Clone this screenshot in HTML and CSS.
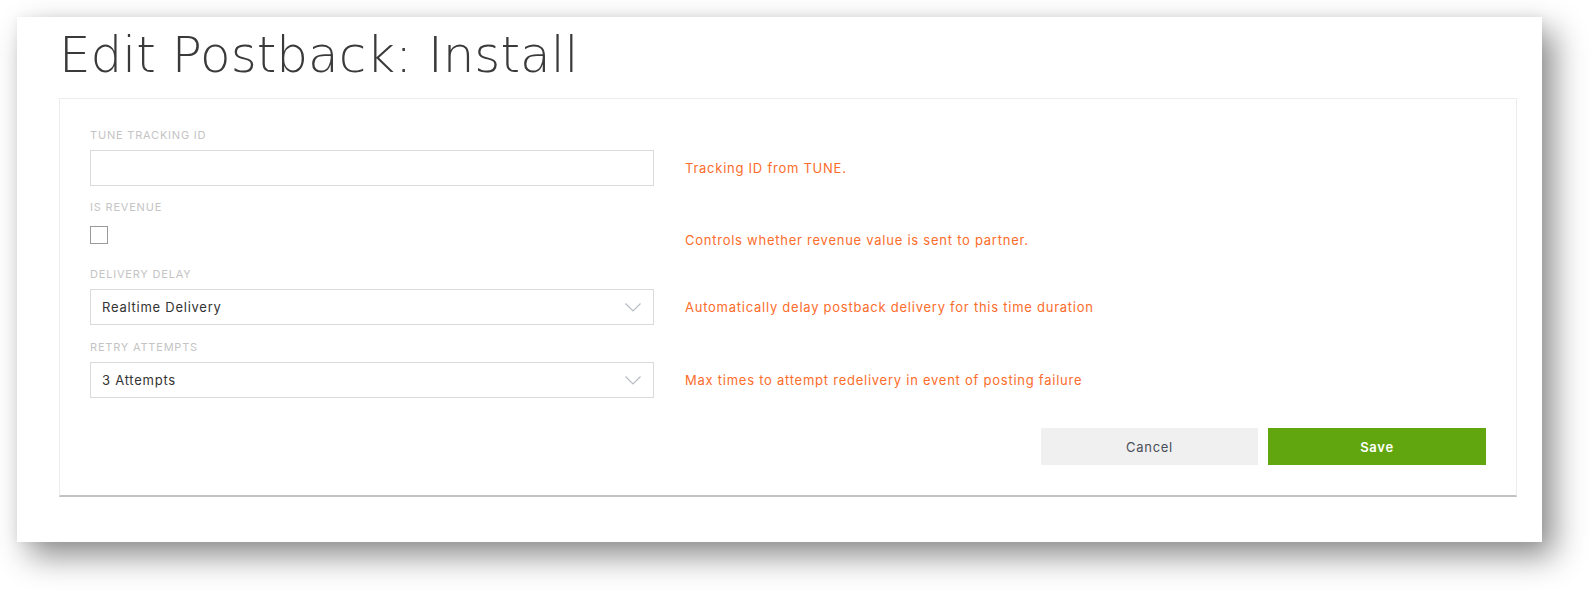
FILE: index.html
```html
<!DOCTYPE html>
<html lang="en">
<head>
<meta charset="utf-8">
<title>Edit Postback: Install</title>
<link rel="stylesheet" href="styles.css">
</head>
<body>
<div class="frame">
  <h1 class="title">Edit Postback: Install</h1>
  <div class="card">
    <div class="field">
      <div class="label">TUNE TRACKING ID</div>
      <div class="row">
        <div class="control input"></div>
        <div class="help">Tracking ID from TUNE.</div>
      </div>
    </div>
    <div class="field field-check">
      <div class="label">IS REVENUE</div>
      <div class="row row-check">
        <div class="control"><span class="checkbox"></span></div>
        <div class="help">Controls whether revenue value is sent to partner.</div>
      </div>
    </div>
    <div class="field field-delay">
      <div class="label">DELIVERY DELAY</div>
      <div class="row">
        <div class="control select">
          <span class="value">Realtime Delivery</span>
          <svg class="chevron" width="16" height="9" viewBox="0 0 16 9"><path d="M0.5 0.5 L8 8 L15.5 0.5" fill="none" stroke="#b9bcc4" stroke-width="1.2"/></svg>
        </div>
        <div class="help">Automatically delay postback delivery for this time duration</div>
      </div>
    </div>
    <div class="field field-retry">
      <div class="label">RETRY ATTEMPTS</div>
      <div class="row">
        <div class="control select">
          <span class="value">3 Attempts</span>
          <svg class="chevron" width="16" height="9" viewBox="0 0 16 9"><path d="M0.5 0.5 L8 8 L15.5 0.5" fill="none" stroke="#b9bcc4" stroke-width="1.2"/></svg>
        </div>
        <div class="help">Max times to attempt redelivery in event of posting failure</div>
      </div>
    </div>
    <div class="actions">
      <button class="btn btn-cancel">Cancel</button>
      <button class="btn btn-save">Save</button>
    </div>
  </div>
</div>
</body>
</html>
```
FILE: styles.css
```css
html, body {
  margin: 0;
  padding: 0;
  background: #ffffff;
}
html {
  height: 590px;
}
body {
  height: 590px;
  box-sizing: border-box;
  padding: 17px 0 0 17px;
  font-family: "Inter", "Open Sans", sans-serif;
}
.frame {
  width: 1525px;
  height: 525px;
  box-sizing: border-box;
  background: #ffffff;
  padding: 13px 25px 0 42px;
  box-shadow: 12px 14px 30px rgba(0, 0, 0, 0.45), 0 0 10px rgba(0, 0, 0, 0.06);
}
.title {
  margin: 0;
  font-family: "DejaVu Sans", sans-serif;
  font-weight: 200;
  font-size: 50px;
  line-height: 50px;
  height: 50px;
  color: #3a3a3a;
}
.card {
  margin-top: 18px;
  border: 1px solid #ececec;
  border-bottom: 2px solid #c2c2c2;
  padding: 29px 30px 30px 30px;
}
.label {
  font-size: 11px;
  line-height: 14px;
  height: 14px;
  color: #c4c4c4;
  letter-spacing: 0.8px;
  margin-bottom: 8px;
}
.row {
  display: flex;
  align-items: center;
}
.control {
  width: 564px;
  flex: none;
  box-sizing: border-box;
}
.input, .select {
  height: 36px;
  border: 1px solid #dadada;
}
.select {
  display: flex;
  align-items: center;
  justify-content: space-between;
  padding: 0 12px 0 11px;
  font-size: 13px;
  letter-spacing: 0.75px;
  color: #333333;
}
.chevron {
  display: block;
}
.help {
  margin-left: 31px;
  font-size: 13px;
  letter-spacing: 0.75px;
  color: #fc6c2a;
}
.field-check {
  margin-top: 14px;
}
.row-check {
  height: 36px;
}
.row-check .control {
  align-self: flex-start;
  padding-top: 4px;
}
.checkbox {
  display: block;
  width: 18px;
  height: 18px;
  box-sizing: border-box;
  border: 1px solid #9a9a9a;
}
.field-delay {
  margin-top: 9px;
}
.field-retry {
  margin-top: 15px;
}
.actions {
  margin-top: 30px;
  display: flex;
  justify-content: flex-end;
  gap: 10px;
}
.btn {
  width: 217px;
  height: 37px;
  border: 0;
  font-family: "Inter", "Open Sans", sans-serif;
  font-size: 13px;
  letter-spacing: 0.7px;
  cursor: pointer;
}
.btn-cancel {
  background: #f0f0f0;
  color: #4a4e5a;
}
.btn-save {
  width: 218px;
  background: #62a60f;
  color: #ffffff;
  font-weight: 600;
}
```
